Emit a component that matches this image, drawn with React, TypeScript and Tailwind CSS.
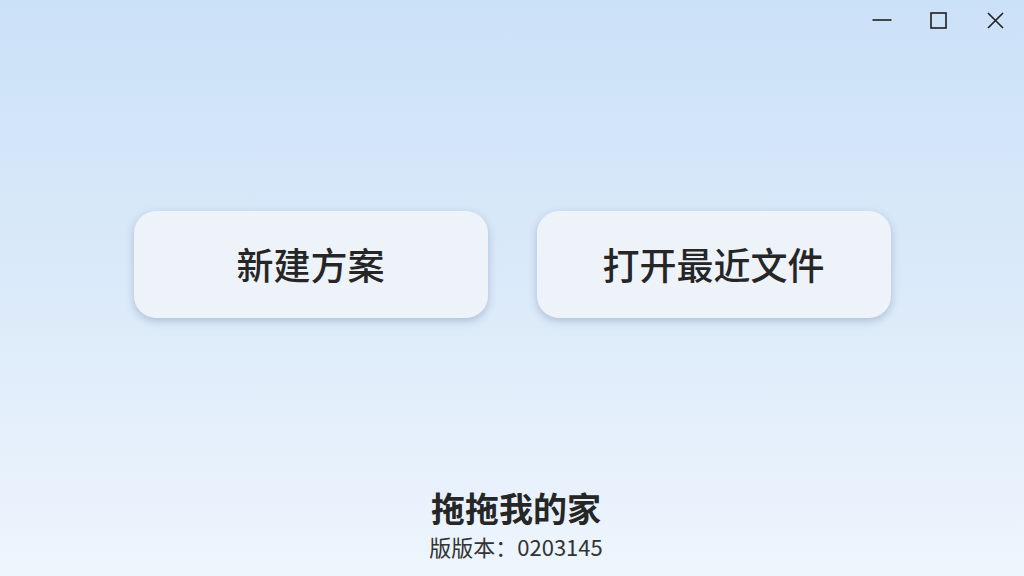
const font = { fontFamily: '"Noto Sans CJK SC", "Noto Sans", sans-serif' };

export default function App() {
  return (
    <div
      className="w-[1024px] h-[576px] flex flex-col bg-gradient-to-b from-[#cbe1f8] via-[#dbeaf9] to-[#eef5fd] text-[#262626] overflow-hidden"
      style={font}
    >
      {/* Barre de titre */}
      <div className="h-[40px] flex justify-end items-center shrink-0">
        <button className="w-[57px] h-[40px] flex items-center justify-center">
          <svg width="20" height="20" viewBox="0 0 20 20" fill="none" stroke="#1f1f1f" strokeWidth="1.6">
            <path d="M0.5 10h19" />
          </svg>
        </button>
        <button className="w-[57px] h-[40px] flex items-center justify-center">
          <svg width="17" height="17" viewBox="0 0 17 17" fill="none" stroke="#1f1f1f" strokeWidth="1.6">
            <rect x="1" y="1" width="15" height="15" />
          </svg>
        </button>
        <button className="w-[57px] h-[40px] flex items-center justify-center">
          <svg width="17" height="17" viewBox="0 0 17 17" fill="none" stroke="#1f1f1f" strokeWidth="1.6">
            <path d="M1 1l15 15M16 1L1 16" />
          </svg>
        </button>
      </div>

      {/* Actions */}
      <div className="flex justify-center gap-[49px] pt-[171px]">
        <button className="w-[354px] h-[107px] rounded-[22px] bg-[#eef3fa] shadow-[0_3px_8px_rgba(60,90,130,0.3)] text-[37px] font-medium leading-none">
          新建方案
        </button>
        <button className="w-[354px] h-[107px] rounded-[22px] bg-[#eef3fa] shadow-[0_3px_8px_rgba(60,90,130,0.3)] text-[37px] font-medium leading-none">
          打开最近文件
        </button>
      </div>

      {/* Pied */}
      <div className="mt-auto pb-[15px] pl-[8px] flex flex-col items-center">
        <div className="text-[34px] font-semibold leading-[46px]">拖拖我的家</div>
        <div className="text-[22px] leading-[30px] text-[#333]">版版本：0203145</div>
      </div>
    </div>
  );
}
